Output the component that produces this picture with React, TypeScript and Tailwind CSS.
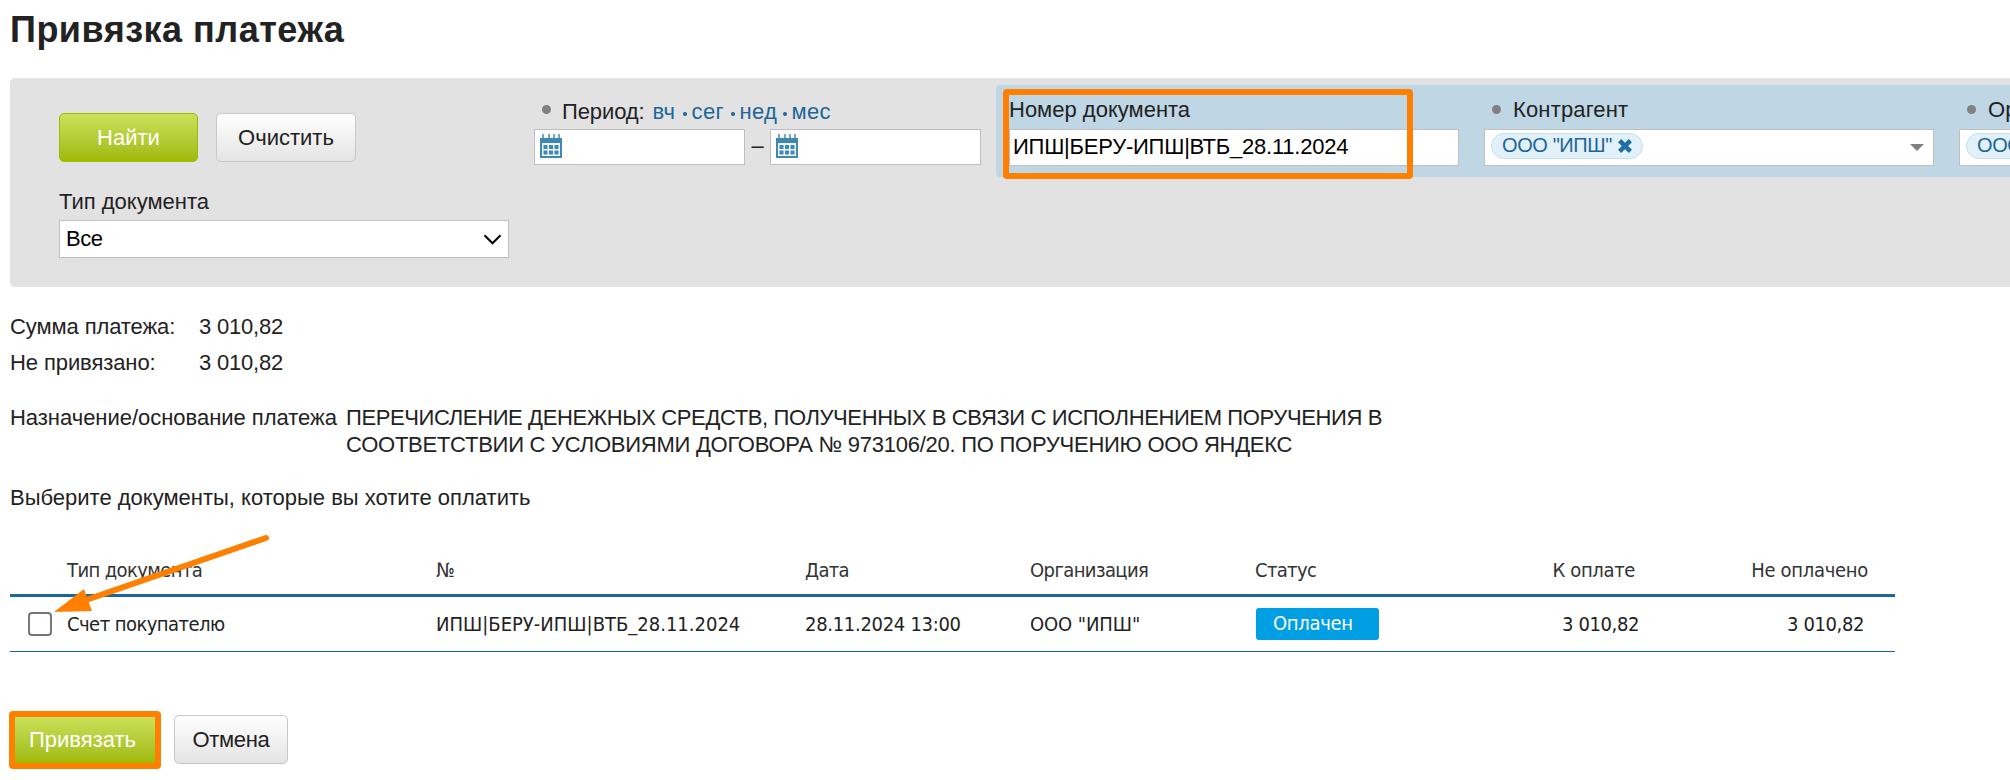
import type { ReactNode } from "react";

const CELL = "font-['DejaVu_Sans_Condensed','Noto_Sans',sans-serif] text-xl leading-7 whitespace-nowrap";
const GRID = "grid grid-cols-[57px_369px_369px_225px_225px_226px_190px_224px]";

function Calendar() {
  return (
    <svg className="mt-1 ml-[5px] h-6 w-[22px]" viewBox="0 0 22 24" fill="#4088b3">
      <path d="M2 0h2v4H2zM8 0h2v4H8zM13 0h2v4h-2zM18 0h2v4h-2z" opacity=".75" />
      <path d="M0 4h22v20H0z" />
      <path d="M2 9h18v13H2z" fill="#eef6fa" />
      <path d="M3.500 11h4v4h-4zM9 11h4v4H9zM14.500 11h4v4h-4zM3.500 16.500h4v4h-4zM9 16.500h4v4H9zM14.500 16.500h4v4h-4z" />
    </svg>
  );
}

function Dot() {
  return <span className="mt-[10px] block size-[9px] shrink-0 rounded-full bg-[#808080]" />;
}

function Separator() {
  return <span className="mt-[14px] mr-[5px] ml-[5px] block size-1 rounded-full bg-[#1c6699]" />;
}

function Tag({ children }: { children: ReactNode }) {
  return (
    <div className="mt-[3px] ml-[6px] flex h-[26px] w-[152px] items-center rounded-full border border-[#c3dff0] bg-[#e2f0f9] pl-[10px] text-[#1c6699]">
      <span className="-mt-[3px] text-xl leading-6 tracking-[-0.4px] whitespace-nowrap">{children}</span>
      <svg className="ml-[6px] size-[14px] shrink-0" viewBox="0 0 14 14" stroke="#1f6fa5" strokeWidth="4.400">
        <path d="M1.600 1.600l10.800 10.800M12.400 1.600L1.600 12.400" />
      </svg>
    </div>
  );
}

function Picker({ label }: { label: string }) {
  return (
    <div className="w-[450px] shrink-0">
      <div className="flex h-7">
        <span className="w-2 shrink-0" />
        <Dot />
        <span className="ml-[12px] pt-px tracking-[0.15px]">{label}</span>
      </div>
      <div className="mt-[6px] flex h-[37px] items-start justify-between border border-[#bfbfbf] bg-white">
        <Tag>ООО "ИПШ"</Tag>
        <svg className="mt-[14px] mr-[9px] h-[7px] w-[14px]" viewBox="0 0 14 7" fill="#808080">
          <path d="M0 0h14L7 7z" />
        </svg>
      </div>
    </div>
  );
}

const GREEN = "rounded-[5px] border border-[#a3b800] bg-linear-to-b from-[#cbe158] to-[#a0ba00] text-white";
const GREY = "rounded-[5px] border border-[#c8c8c8] bg-linear-to-b from-white to-[#e4e4e4]";

export default function App() {
  return (
    <main className="relative h-[780px] w-[2010px] overflow-hidden bg-white pt-[10px] pl-[10px] font-['Liberation_Sans',Arial,sans-serif] text-[22px] leading-7 text-[#222]">
      <h1 className="text-4xl leading-10 font-bold tracking-[0.5px]">Привязка платежа</h1>

      <section className="mt-[28px] h-[209px] rounded-l-[5px] bg-[#e2e2e2] pl-[49px]">
        <div className="flex h-[99px]">
          <div className="flex w-[475px] shrink-0 gap-[18px] pt-[35px]">
            <button className={`h-[49px] w-[139px] ${GREEN}`}>Найти</button>
            <button className={`h-[49px] w-[140px] ${GREY}`}>Очистить</button>
          </div>

          <div className="w-[447px] shrink-0 pt-[19px]">
            <div className="flex h-7">
              <span className="-mt-[2px] ml-2"><Dot /></span>
              <span className="ml-[11px] pt-px tracking-[-0.1px]">Период:</span>
              <span className="ml-[8px] flex pt-px tracking-[0.3px] text-[#1c6699]">
                <span className="w-[25px]">вч</span>
                <Separator />
                <span className="w-[34px]">сег</span>
                <Separator />
                <span className="w-[38px]">нед</span>
                <Separator />
                <span>мес</span>
              </span>
            </div>
            <div className="mt-1 flex h-9">
              <div className="w-[211px] border border-[#bfbfbf] bg-white"><Calendar /></div>
              <span className="w-[25px] pt-[3px] text-center">–</span>
              <div className="w-[211px] border border-[#bfbfbf] bg-white"><Calendar /></div>
            </div>
          </div>

          <div className="mt-[7px] ml-[15px] flex h-[92px] min-w-0 flex-1 gap-[25px] rounded-l-[4px] bg-[#bfd7e5] pt-[10px] pl-[13px]">
            <div className="relative w-[450px] shrink-0">
              <div className="h-7 pt-px">Номер документа</div>
              <div className="mt-[6px] h-[37px] border border-[#bfbfbf] bg-white pt-[3px] pl-[3px] tracking-[-0.23px] text-black">
                ИПШ|БЕРУ-ИПШ|ВТБ_28.11.2024
              </div>
              <div className="absolute -top-[6px] -left-[6px] h-[90px] w-[410px] rounded-[4px] border-6 border-[#ff8000]" />
            </div>
            <Picker label="Контрагент" />
            <Picker label="Организация" />
          </div>
        </div>

        <div className="mt-[10px] h-7 pt-px">Тип документа</div>
        <div className="mt-[5px] flex h-[38px] w-[450px] items-center justify-between border border-[#bfbfbf] bg-white pr-[6px] pl-[6px] text-black">
          <span className="tracking-[-0.4px]">Все</span>
          <svg className="h-[11px] w-[19px]" viewBox="0 0 19 11" fill="none" stroke="#000" strokeWidth="2">
            <path d="M1.500 1.300l8 8 8-8" />
          </svg>
        </div>
      </section>

      <dl className="mt-[22px] grid grid-cols-[189px_auto] leading-9">
        <dt className="tracking-[-0.1px]">Сумма платежа:</dt>
        <dd className="tracking-[-0.2px]">3 010,82</dd>
        <dt className="tracking-[-0.1px]">Не привязано:</dt>
        <dd className="tracking-[-0.2px]">3 010,82</dd>
      </dl>

      <div className="mt-[23px] flex leading-[27px] whitespace-nowrap">
        <span className="w-[336px] tracking-[-0.03px]">Назначение/основание платежа</span>
        <span className="tracking-[-0.38px]">
          ПЕРЕЧИСЛЕНИЕ ДЕНЕЖНЫХ СРЕДСТВ, ПОЛУЧЕННЫХ В СВЯЗИ С ИСПОЛНЕНИЕМ ПОРУЧЕНИЯ В<br />
          <span className="tracking-[-0.25px]">СООТВЕТСТВИИ С УСЛОВИЯМИ ДОГОВОРА № 973106/20. ПО ПОРУЧЕНИЮ ООО ЯНДЕКС</span>
        </span>
      </div>

      <p className="mt-[26px]">Выберите документы, которые вы хотите оплатить</p>

      <div className="relative mt-[38px] w-[1885px]">
        <div className={`${GRID} ${CELL} h-[47px] border-b-3 border-[#1c6699] pt-[6px] text-[#333]`}>
          <span />
          <span className="tracking-[-0.6px]">Тип документа</span>
          <span className="tracking-[1px]">№</span>
          <span className="tracking-[-0.65px]">Дата</span>
          <span className="tracking-[-0.6px]">Организация</span>
          <span className="tracking-[-0.65px]">Статус</span>
          <span className="pr-[36px] text-right tracking-[-0.35px]">К оплате</span>
          <span className="pr-[27px] text-right tracking-[-0.3px]">Не оплачено</span>
        </div>
        <div className={`${GRID} ${CELL} h-[55px] items-center border-b border-[#1c6699]`}>
          <span className="ml-[18px] block size-6 rounded-[4px] border-2 border-[#767676] bg-white" />
          <span className="-mt-px tracking-[-0.55px]">Счет покупателю</span>
          <span className="-mt-px">ИПШ|БЕРУ-ИПШ|ВТБ_28.11.2024</span>
          <span className="-mt-px tracking-[-0.3px]">28.11.2024 13:00</span>
          <span className="-mt-px tracking-[-0.1px]">ООО "ИПШ"</span>
          <span className="ml-px block h-8 w-[123px] rounded-[3px] bg-[#009fe3] pl-[17px] leading-[31px] tracking-[-0.3px] text-white">Оплачен</span>
          <span className="-mt-px pr-[32px] text-right tracking-[-0.4px]">3 010,82</span>
          <span className="-mt-px pr-[31px] text-right tracking-[-0.4px]">3 010,82</span>
        </div>
        <svg className="absolute -top-[16px] left-[42px] h-[80px] w-[222px]" viewBox="0 0 222 80">
          <path d="M214 4L34 66" stroke="#ff8000" strokeWidth="6" strokeLinecap="round" />
          <path d="M2 78L32 55l8 22z" fill="#ff8000" />
        </svg>
      </div>

      <div className="mt-[63px] flex gap-[14px]">
        <div className="relative h-[49px] w-[150px]">
          <button className={`h-full w-full pr-[5px] ${GREEN}`}>Привязать</button>
          <div className="absolute -top-1 -left-px h-[58px] w-[152px] rounded-[4px] border-6 border-[#ff8000]" />
        </div>
        <button className={`h-[49px] w-[114px] tracking-[-0.3px] ${GREY}`}>Отмена</button>
      </div>
    </main>
  );
}
